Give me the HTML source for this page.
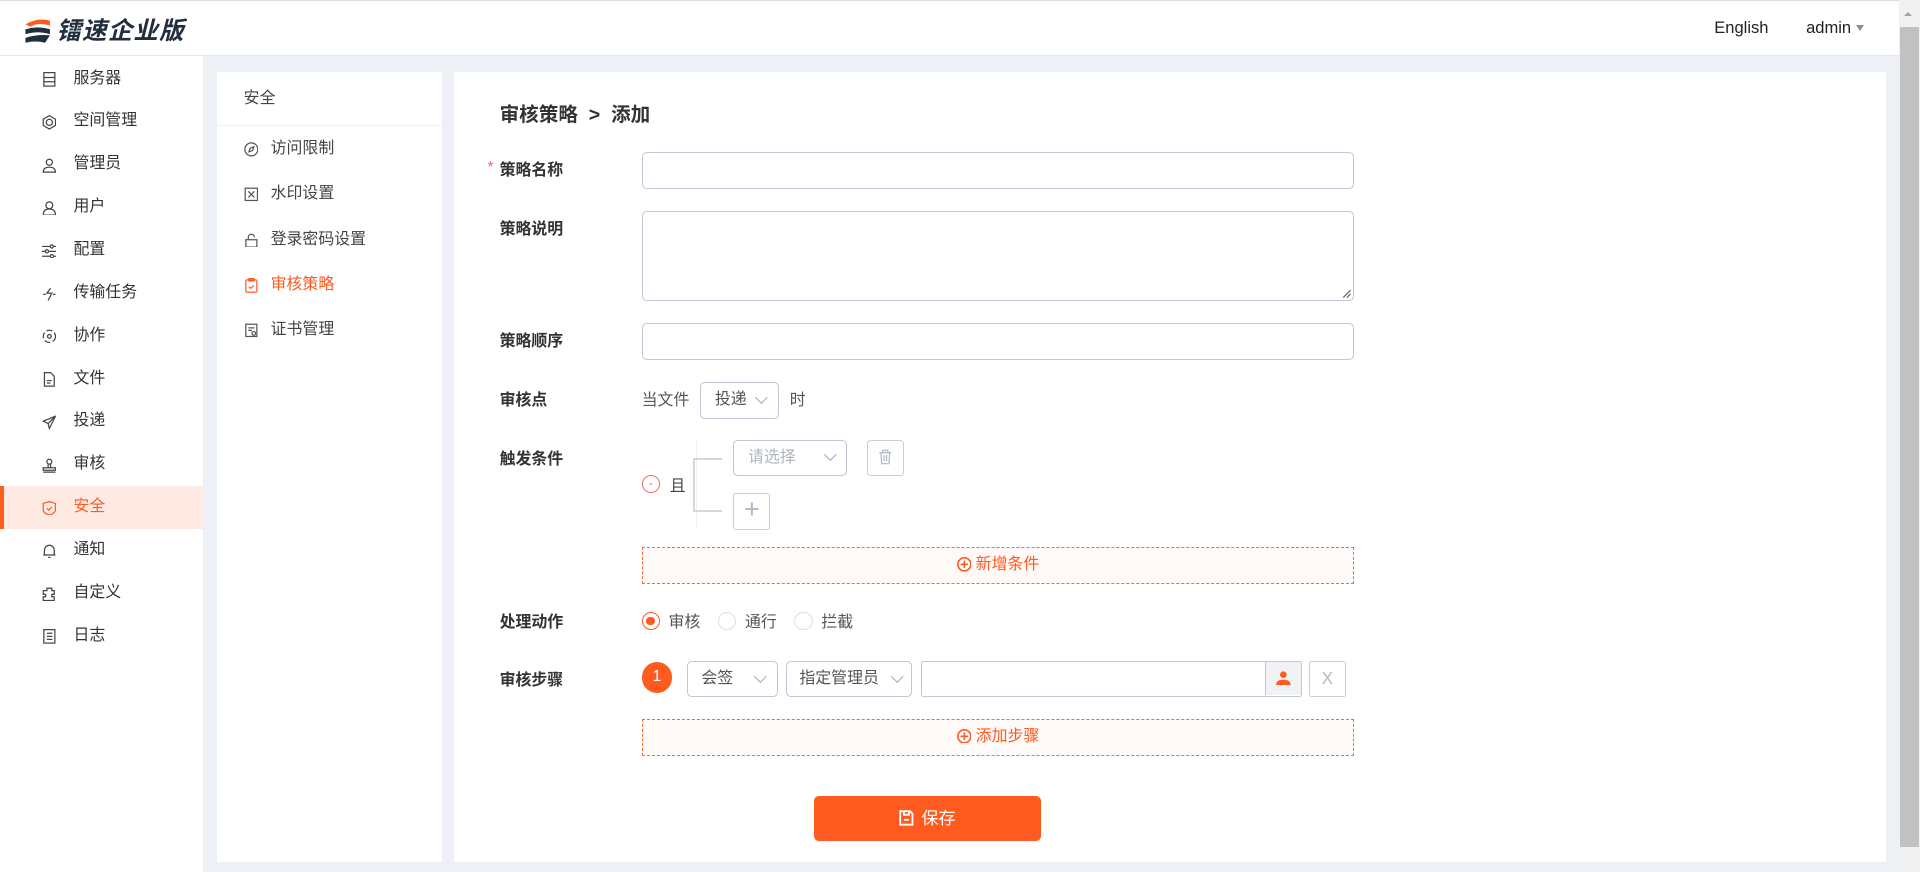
<!DOCTYPE html>
<html><head><meta charset="utf-8"><style>
*{box-sizing:border-box;margin:0;padding:0}
html,body{width:1920px;height:872px;overflow:hidden;background:#edf0f5}
#w{zoom:1.22449;width:1568px;height:712px;position:relative;font-family:"Liberation Sans","Noto Sans CJK SC",sans-serif;font-size:13px;color:#333}
.a{position:absolute}
.hd{left:0;top:0;width:1551px;height:46px;background:#fff;border-top:1px solid #ddd;border-bottom:1px solid #e4e6ea}
.sb{left:0;top:46px;width:166px;height:666px;background:#fff}
.mi{position:absolute;left:0;width:166px;height:35px;line-height:35px;padding-left:60px;color:#333;font-size:13px}
.mi svg{position:absolute;left:34px;top:12px}
.mi.on{background:#ffe9e3;color:#ff5a1f}
.mi.on:before{content:"";position:absolute;left:0;top:0;width:3px;height:35px;background:#ff5a1f}
.p{background:#fff}
.si{position:absolute;left:0;width:184px;height:37px;line-height:37px;padding-left:44px;color:#444}
.si svg{position:absolute;left:22px;top:13px}
.lb{position:absolute;left:408px;font-weight:bold;color:#333;font-size:13px}
.in{position:absolute;border:1px solid #c0c6d4;border-radius:4px;background:#fff}
.sel{position:absolute;border:1px solid #c0c6d4;border-radius:4px;background:#fff;color:#555;padding-left:11px;line-height:27px}
.sel i{position:absolute;right:10px;top:8px;width:7px;height:7px;border-right:1px solid #a0a8b8;border-bottom:1px solid #a0a8b8;transform:rotate(45deg)}
.dash{position:absolute;left:524px;width:582px;height:30px;border:1px dashed #ff6a33;background:#fffaf7;color:#ff5a1f;text-align:center;line-height:28px}
.rd{display:inline-block;width:15px;height:15px;border:1px solid #dcdfe6;border-radius:50%;vertical-align:-3px;margin-right:7px}
</style></head><body><div id="w">
<div class="a hd">
 <svg class="a" style="left:19px;top:13px" width="24" height="22" viewBox="0 0 24 22"><path d="M2 6 Q12 0 22 3 L22 7 Q12 4 6 8Z" fill="#ff5a1f"/><path d="M2 10 Q12 7 22 10 L22 14 Q12 11 2 14Z" fill="#222d3d"/><path d="M2 17 Q12 14 22 15 L18 21 Q10 19 2 21Z" fill="#222d3d"/></svg>
 <div class="a" style="left:46px;top:9px;font-size:20px;font-weight:bold;font-style:italic;color:#222d3d;letter-spacing:1px">镭速企业版</div>
 <div class="a" style="left:1400px;top:14px;font-size:13.5px;color:#222">English</div>
 <div class="a" style="left:1475px;top:14px;font-size:13.5px;color:#222">admin</div>
 <div class="a" style="left:1516px;top:20px;border:4px solid transparent;border-top:5px solid #8a8f9c;border-bottom:0;width:0;height:0"></div>
</div>
<div class="a" style="left:1551px;top:0;width:17px;height:712px;background:#f1f1f1"><div class="a" style="left:1px;top:22px;width:15px;height:670px;background:#c1c1c1"></div><div class="a" style="left:4px;top:10px;border:4px solid transparent;border-bottom:4px solid #a3a3a3;border-top:0"></div></div>
<div class="a sb">
<div class="mi" style="top:1px"><svg width="12" height="12" viewBox="0 0 12 12" fill="none" stroke="#444"><rect x="1.5" y=".5" width="9" height="11"/><path d="M1.5 4.5h9M1.5 8h9"/></svg>服务器</div>
<div class="mi" style="top:36px"><svg width="12" height="12" viewBox="0 0 12 12" fill="none" stroke="#444"><path d="M6 .5 11 3.5v5L6 11.5 1 8.5v-5Z"/><circle cx="6" cy="6" r="2.5"/></svg>空间管理</div>
<div class="mi" style="top:71px"><svg width="12" height="12" viewBox="0 0 12 12" fill="none" stroke="#444"><circle cx="6" cy="3.5" r="2.5"/><path d="M1 11.5q0-4 5-4t5 4Z"/></svg>管理员</div>
<div class="mi" style="top:106px"><svg width="12" height="12" viewBox="0 0 12 12" fill="none" stroke="#444"><circle cx="6" cy="3.5" r="2.8"/><path d="M1 11.5q0-5 5-5t5 5Z"/></svg>用户</div>
<div class="mi" style="top:141px"><svg width="12" height="12" viewBox="0 0 12 12" fill="none" stroke="#444"><path d="M0 2h12M0 6h12M0 10h12"/><circle cx="8" cy="2" r="1.3" fill="#fff"/><circle cx="4" cy="6" r="1.3" fill="#fff"/><circle cx="8" cy="10" r="1.3" fill="#fff"/></svg>配置</div>
<div class="mi" style="top:176px"><svg width="12" height="12" viewBox="0 0 12 12" fill="none" stroke="#444"><path d="M7 1 4 5h4L5 11M1 6h2M9 6h2"/></svg>传输任务</div>
<div class="mi" style="top:211px"><svg width="12" height="12" viewBox="0 0 12 12" fill="none" stroke="#444"><circle cx="6" cy="6" r="5" stroke-dasharray="5 2"/><circle cx="6" cy="6" r="1.5"/></svg>协作</div>
<div class="mi" style="top:246px"><svg width="12" height="12" viewBox="0 0 12 12" fill="none" stroke="#444"><path d="M2 .5h5l3 3v8H2Z M4 7h4M4 9h3"/></svg>文件</div>
<div class="mi" style="top:281px"><svg width="12" height="12" viewBox="0 0 12 12" fill="none" stroke="#444"><path d="M11 1 1 5l4 2 1 4Z M5 7 11 1"/></svg>投递</div>
<div class="mi" style="top:316px"><svg width="12" height="12" viewBox="0 0 12 12" fill="none" stroke="#444"><circle cx="6" cy="3" r="2"/><path d="M5 5v3M7 5v3M1 8h10v2H1ZM1 11.5h10"/></svg>审核</div>
<div class="mi on" style="top:351px"><svg width="12" height="12" viewBox="0 0 12 12" fill="none" stroke="#ff5a1f"><path d="M6 .5 11 2v5q0 3-5 4.5Q1 10 1 7V2Z M4 6l1.5 1.5L8 5"/></svg>安全</div>
<div class="mi" style="top:386px"><svg width="12" height="12" viewBox="0 0 12 12" fill="none" stroke="#444"><path d="M2 9V5a4 4 0 0 1 8 0v4H2ZM1 9h10M5 11h2"/></svg>通知</div>
<div class="mi" style="top:421px"><svg width="12" height="12" viewBox="0 0 12 12" fill="none" stroke="#444"><path d="M4 1h4v2h2v3h-2v2h2v3H1V8h2V6H1V3h3Z"/></svg>自定义</div>
<div class="mi" style="top:456px"><svg width="12" height="12" viewBox="0 0 12 12" fill="none" stroke="#444"><rect x="1.5" y=".5" width="9" height="11"/><path d="M4 3.5h4.5M4 6h4.5M4 8.5h4.5"/></svg>日志</div>
</div>
<div class="a p" style="left:177px;top:59px;width:184px;height:645px">
 <div style="height:44px;line-height:44px;padding-left:22px;border-bottom:1px solid #eef0f3;color:#444">安全</div>
 <div class="si" style="top:44px"><svg width="12" height="12" viewBox="0 0 12 12" fill="none" stroke="#555"><circle cx="6" cy="6" r="5.3"/><path d="M8 4 5 5 4 8 7 7Z"/></svg>访问限制</div>
 <div class="si" style="top:81px"><svg width="12" height="12" viewBox="0 0 12 12" fill="none" stroke="#555"><rect x="1" y="1" width="10" height="10"/><path d="M3.5 3.5l5 5M8.5 3.5l-5 5"/></svg>水印设置</div>
 <div class="si" style="top:118px"><svg width="12" height="12" viewBox="0 0 12 12" fill="none" stroke="#555"><rect x="1.5" y="5.5" width="9" height="6"/><path d="M3.5 5.5V3.5a2.5 2.5 0 0 1 5 0"/></svg>登录密码设置</div>
 <div class="si" style="top:155px;color:#ff5a1f"><svg width="12" height="12" viewBox="0 0 12 12" fill="none" stroke="#ff5a1f"><rect x="1.5" y="1.5" width="9" height="10" rx="1"/><path d="M4 .5h4v2H4ZM4 7l1.5 1.5L8 6"/></svg>审核策略</div>
 <div class="si" style="top:192px"><svg width="12" height="12" viewBox="0 0 12 12" fill="none" stroke="#555"><rect x="1.5" y="1" width="9" height="10"/><path d="M3.5 4h5M3.5 6h3"/><circle cx="8" cy="8.5" r="1.5"/></svg>证书管理</div>
</div>
<div class="a p" style="left:371px;top:59px;width:1169px;height:645px"></div>
<div class="a" style="left:408px;top:80px;font-size:16px;font-weight:bold;color:#333">审核策略 &nbsp;&gt;&nbsp; 添加</div>
<div class="lb" style="top:128px"><span class="a" style="left:-10px;top:2px;color:#f56c6c;font-weight:normal">*</span>策略名称</div>
<div class="in" style="left:524px;top:124px;width:582px;height:30px"></div>
<div class="lb" style="top:176px">策略说明</div>
<div class="in" style="left:524px;top:172px;width:582px;height:74px"><svg class="a" style="right:2px;bottom:2px" width="7" height="7"><path d="M1 7 7 1M4 7 7 4" stroke="#666"/></svg></div>
<div class="lb" style="top:268px">策略顺序</div>
<div class="in" style="left:524px;top:264px;width:582px;height:30px"></div>
<div class="lb" style="top:316px">审核点</div>
<div class="a" style="left:524px;top:316px;color:#555">当文件</div>
<div class="sel" style="left:572px;top:312px;width:64px;height:30px;line-height:28px">投递<i></i></div>
<div class="a" style="left:645px;top:316px;color:#555">时</div>
<div class="lb" style="top:364px">触发条件</div>
<div class="a" style="left:524px;top:388px;width:15px;height:15px;border:1px solid #f56c6c;border-radius:50%;color:#f56c6c;font-size:10px;line-height:12px;text-align:center">-</div>
<div class="a" style="left:547px;top:386px;color:#444">且</div>
<div class="a" style="left:568px;top:359px;width:1px;height:73px;background:#eee"></div>
<div class="a" style="left:566px;top:374px;width:24px;height:44px;border:2px solid #d5d7dc;border-right:0"></div>
<div class="sel" style="left:599px;top:359px;width:93px;height:30px;line-height:28px;color:#b0b5c0">请选择<i></i></div>
<div class="a" style="left:708px;top:359px;width:30px;height:30px;border:1px solid #c8cfdb;border-radius:3px"><svg class="a" style="left:8px;top:7px" width="12" height="13" viewBox="0 0 12 13" fill="none" stroke="#b0b8c8"><path d="M1 3h10M4 3V1h4v2M2.5 3l.5 9h6l.5-9M5 5v5M7 5v5"/></svg></div>
<div class="a" style="left:599px;top:403px;width:30px;height:30px;border:1px solid #c8cfdb;border-radius:2px;color:#b0b8c8;font-size:22px;line-height:26px;text-align:center">+</div>
<div class="dash" style="top:447px"><svg width="12" height="12" viewBox="0 0 12 12" fill="none" stroke="#ff5a1f" style="vertical-align:-2px"><circle cx="6" cy="6" r="5.3" stroke-width="1.3"/><path d="M3 6h6M6 3v6" stroke-width="1.3"/></svg> 新增条件</div>
<div class="lb" style="top:497px">处理动作</div>
<div class="a" style="left:524px;top:497px;color:#555"><span class="rd" style="border:1px solid #ff5a1f;position:relative"><span class="a" style="left:3px;top:3px;width:7px;height:7px;border-radius:50%;background:#ff5a1f"></span></span>审核 &nbsp; &nbsp;<span class="rd"></span>通行 &nbsp; &nbsp;<span class="rd"></span>拦截</div>
<div class="lb" style="top:545px">审核步骤</div>
<div class="a" style="left:524px;top:541px;width:25px;height:25px;border-radius:50%;background:#ff5a1f;color:#fff;text-align:center;line-height:25px;font-size:13px">1</div>
<div class="sel" style="left:561px;top:540px;width:74px;height:29px">会签<i></i></div>
<div class="sel" style="left:642px;top:540px;width:103px;height:29px;padding-left:10px">指定管理员<i style="right:8px"></i></div>
<div class="a" style="left:752px;top:540px;width:311px;height:29px;border:1px solid #c0c6d4;border-radius:2px"><div class="a" style="right:0;top:0;width:29px;height:27px;background:#f0f2f5;border-left:1px solid #c0c6d4"><svg class="a" style="left:8px;top:7px" width="12" height="12" viewBox="0 0 12 12" fill="#ff5a1f"><circle cx="6" cy="3" r="2.7"/><path d="M0 12q0-5 6-5t6 5Z"/></svg></div></div>
<div class="a" style="left:1069px;top:540px;width:30px;height:29px;border:1px solid #c8cfdb;border-radius:2px;color:#b0b8c8;text-align:center;line-height:27px;font-size:14px">X</div>
<div class="dash" style="top:587px"><svg width="12" height="12" viewBox="0 0 12 12" fill="none" stroke="#ff5a1f" style="vertical-align:-2px"><circle cx="6" cy="6" r="5.3" stroke-width="1.3"/><path d="M3 6h6M6 3v6" stroke-width="1.3"/></svg> 添加步骤</div>
<div class="a" style="left:665px;top:650px;width:185px;height:37px;background:#ff5a1f;border-radius:4px;color:#fff;text-align:center;line-height:37px;font-size:14px"><svg width="12" height="13" viewBox="0 0 12 13" fill="none" stroke="#fff" stroke-width="1.5" style="vertical-align:-2px;margin-right:6px"><path d="M1 1h8l2 2v9H1Z M4 1v3h4V1M4 8h4"/></svg>保存</div>
</div></body></html>
